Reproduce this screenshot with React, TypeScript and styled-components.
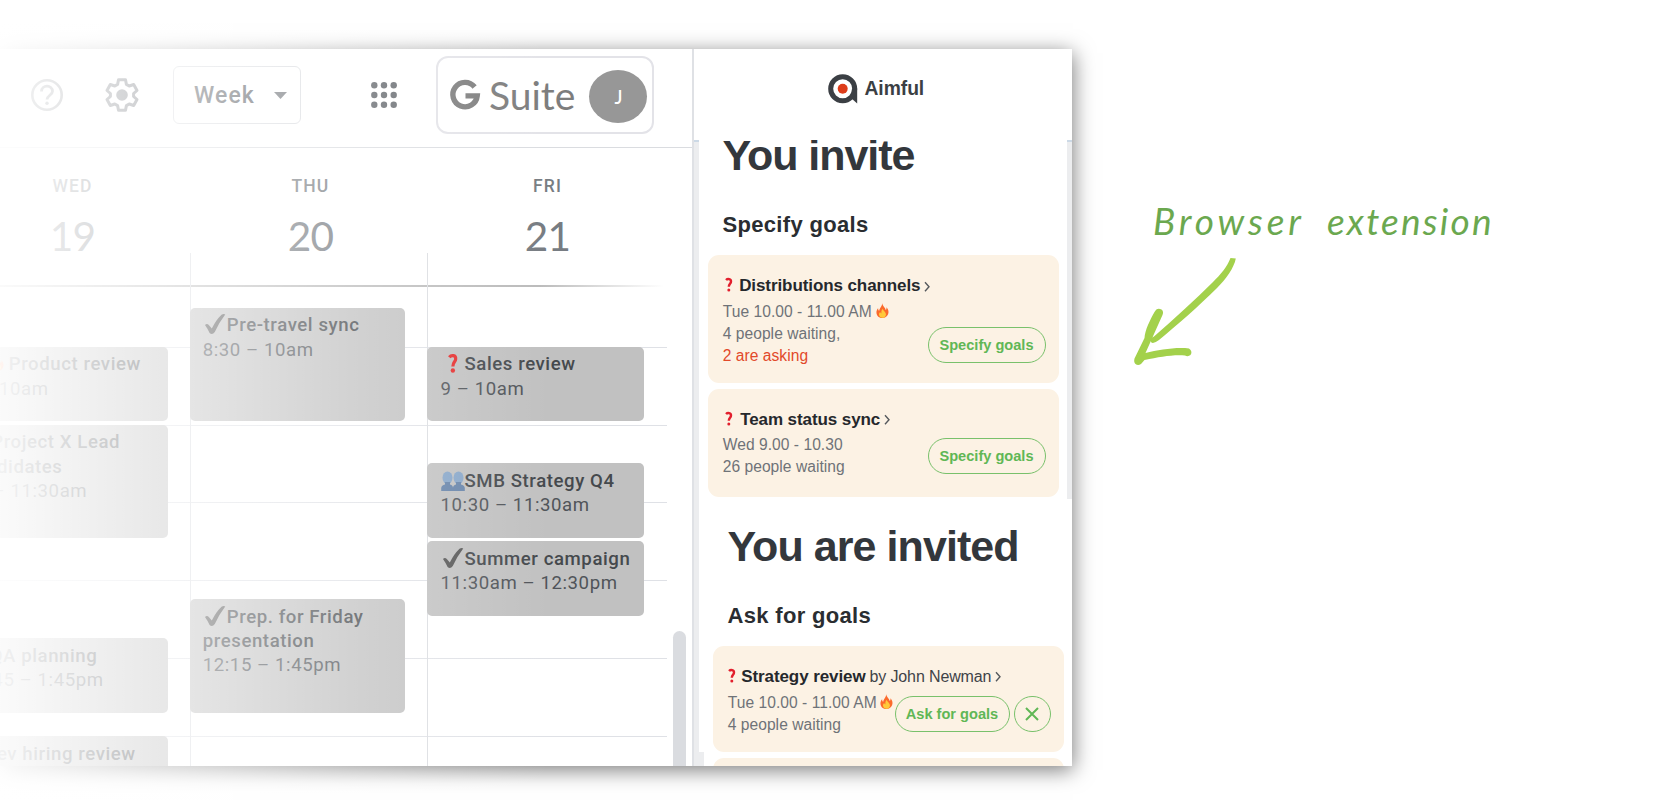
import React from 'react';
import styled, { createGlobalStyle } from 'styled-components';

const Global = createGlobalStyle`
  * { box-sizing: border-box; }
  body { margin: 0; background: #fff; }
`;

const Page = styled.main`
  position: relative;
  display: flex;
  align-items: flex-start;
  width: 1680px;
  height: 800px;
  padding-top: 49.4px;
  overflow: hidden;
  background: #fff;
`;

const Window = styled.section`
  display: flex;
  flex: none;
  width: 1072px;
  height: 716.6px;
  background: #fff;
  box-shadow: 1px 4px 20px rgba(0, 0, 0, 0.52);
`;

const Fade = styled.div`
  position: absolute;
  left: 0;
  top: 0;
  width: 560px;
  height: 800px;
  pointer-events: none;
  background: linear-gradient(
    to right,
    rgba(255, 255, 255, 0.93) 0,
    rgba(255, 255, 255, 0.62) 170px,
    rgba(255, 255, 255, 0.28) 350px,
    rgba(255, 255, 255, 0.14) 440px,
    rgba(255, 255, 255, 0) 550px
  );
`;

/* calendar */

const Calendar = styled.div`
  display: flex;
  flex-direction: column;
  flex: none;
  width: 694px;
  height: 100%;
  overflow: hidden;
  border-right: 2px solid #dfe1e5;
  font-family: Roboto, sans-serif;
`;

const Toolbar = styled.header`
  display: flex;
  align-items: center;
  flex: none;
  height: 98.8px;
  padding-left: 30px;
  padding-bottom: 6px;
  border-bottom: 1.5px solid #dadce0;
`;

const Icon = styled.svg<{ $left?: number }>`
  display: block;
  flex: none;
  overflow: visible;
  margin-left: ${(p) => p.$left ?? 0}px;
`;

const WeekSelect = styled.div`
  display: flex;
  align-items: center;
  justify-content: space-between;
  flex: none;
  width: 128px;
  height: 58px;
  margin-left: 34.5px;
  padding: 0 13px 0 20px;
  border: 1.5px solid #dadce0;
  border-radius: 6px;
  color: #5c6065;
  font-size: 23px;
  font-weight: 500;
  letter-spacing: 1.1px;
`;

const Account = styled.div`
  display: flex;
  align-items: center;
  flex: none;
  width: 217.5px;
  height: 78px;
  margin-left: 38px;
  padding-left: 11px;
  border: 2px solid #e3e3e8;
  border-radius: 12px;
`;

const SuiteName = styled.span`
  margin-left: 8px;
  width: 88px;
  color: #7d7d7d;
  font: 400 39px/44px Lato, sans-serif;
  letter-spacing: 0;
`;

const Avatar = styled.span`
  display: grid;
  place-items: center;
  flex: none;
  width: 58px;
  height: 53px;
  margin: 3px 0 0 11.5px;
  padding-left: 2px;
  border-radius: 50%;
  background: #979797;
  color: #fff;
  font: 500 19px/1 Lato, sans-serif;
`;

const Days = styled.div`
  display: flex;
  flex: none;
  height: 137px;
  padding-top: 28px;
`;

const Day = styled.div<{ $w: number }>`
  flex: none;
  width: ${(p) => p.$w}px;
  text-align: center;
  color: #787d82;
`;

const DayName = styled.div`
  font-size: 17.5px;
  font-weight: 500;
  line-height: 20px;
  letter-spacing: 1.1px;
`;

const DayNumber = styled.div`
  margin-top: 15px;
  color: #777c82;
  font: 400 40.5px/50px Lato, sans-serif;
  letter-spacing: -0.8px;
`;

const Body = styled.div`
  display: grid;
  grid-template-columns: 667px 6px 13px;
  grid-template-rows: minmax(0, 1fr);
  flex: 1;
  min-height: 0;
  margin-top: -32px;
`;

const Hours = styled.div`
  grid-area: 1 / 1;
  padding-top: 32px;
`;

const TopRule = styled.div`
  height: 1.6px;
  background: linear-gradient(to right, #bbb 0, #bbb 540px, rgba(187, 187, 187, 0) 664px);
`;

const Hour = styled.div<{ $h: number }>`
  height: ${(p) => p.$h}px;
  border-bottom: 1.6px solid #dfe1e6;
`;

const Columns = styled.div`
  grid-area: 1 / 1;
  display: flex;
  margin-left: -47px;
`;

const Column = styled.div<{ $w: number }>`
  flex: none;
  width: ${(p) => p.$w}px;
  border-left: 1.5px solid #dadce0;
`;

const Event = styled.article<{ $gap: number; $h: number; $w?: number; $in?: number }>`
  width: ${(p) => p.$w ?? 215}px;
  height: ${(p) => p.$h}px;
  margin: ${(p) => p.$gap}px 0 0 -0.8px;
  padding: 5.6px 0 0 ${(p) => p.$in ?? 12.5}px;
  border-radius: 5px;
  background: #c1c1c1;
  color: #45494d;
  font-size: 18.6px;
  line-height: 24.3px;
  letter-spacing: 0.58px;
  white-space: nowrap;
`;

const EventTitle = styled.div`
  display: flex;
  align-items: center;
  font-weight: 500;
  height: 24.3px;
`;

const Indented = styled.span<{ $left: number }>`
  margin-left: ${(p) => p.$left}px;
`;

const EventTime = styled.div`
  color: #505459;
`;

const Scrollbar = styled.div`
  grid-area: 1 / 3;
  align-self: end;
  height: 135px;
  border-radius: 7px 7px 0 0;
  background: #dadce0;
`;

/* extension panel */

const Panel = styled.aside`
  display: flex;
  flex-direction: column;
  width: 378px;
  height: 100%;
  overflow: hidden;
  font-family: 'Liberation Sans', Arial, sans-serif;
`;

const Brand = styled.div`
  display: flex;
  align-items: center;
  flex: none;
  height: 91px;
  padding: 0 0 11px 134px;
  color: #3b3f44;
  font-size: 19.3px;
  font-weight: 700;
`;

const BrandName = styled.span`
  margin-left: 6.5px;
  letter-spacing: -0.05px;
`;

const PanelBody = styled.div`
  display: flex;
  align-items: flex-start;
  flex: 1;
  min-height: 0;
`;

const Edge = styled.div<{ $h: string }>`
  flex: none;
  width: 5px;
  height: ${(p) => p.$h};
  border-top: 2px solid #ccd9e6;
  background: #ecedef;
`;

const Content = styled.div`
  flex: none;
  width: 368px;
  height: 100%;
  overflow: hidden;
  background: linear-gradient(#ecedef, #ecedef) left bottom / 5px 14px no-repeat;
`;

const Group = styled.section<{ $shift: number; $top: number }>`
  width: 351.5px;
  margin: ${(p) => p.$top}px 0 0 ${(p) => p.$shift}px;
`;

const Heading = styled.h1<{ $ls?: number }>`
  margin: 0 0 43.7px 15px;
  color: #33373c;
  font-size: 43px;
  line-height: 30px;
  letter-spacing: ${(p) => p.$ls ?? -1.05}px;
  white-space: nowrap;
`;

const Subheading = styled.h2`
  margin: 0 0 18.9px 15px;
  color: #2a2d31;
  font-size: 22px;
  line-height: 22px;
  letter-spacing: 0.32px;
`;

const Card = styled.article<{ $h: number; $pad?: number }>`
  height: ${(p) => p.$h}px;
  margin-bottom: 6px;
  padding: ${(p) => p.$pad ?? 20.4}px 13.5px 0 15.2px;
  border-radius: 11px;
  background: #fcf2e4;
`;

const CardTitle = styled.div`
  display: flex;
  align-items: center;
  height: 22px;
  color: #25282c;
  font-size: 17px;
  line-height: 22px;
  white-space: nowrap;
`;

const TitleText = styled.strong<{ $left: number }>`
  margin-left: ${(p) => p.$left}px;
  letter-spacing: -0.09px;
`;

const Owner = styled.span`
  margin-left: 4px;
  color: #3f4348;
  font-size: 16px;
  letter-spacing: -0.13px;
`;

const CardRow = styled.div`
  display: flex;
  align-items: flex-end;
  justify-content: space-between;
  margin-top: 3.6px;
`;

const Lines = styled.div`
  width: 160px;
  color: #6f7378;
  font-size: 15.6px;
  line-height: 22px;
  letter-spacing: 0.04px;
  white-space: nowrap;
`;

const Line = styled.div<{ $alert?: boolean }>`
  display: flex;
  align-items: center;
  height: 22px;
  color: ${(p) => (p.$alert ? '#e2492a' : 'inherit')};
`;

const Actions = styled.div`
  display: flex;
  flex: none;
  gap: 4px;
  margin-bottom: 4px;
`;

const Pill = styled.button<{ $w: number }>`
  flex: none;
  width: ${(p) => p.$w}px;
  height: 36px;
  padding: 0;
  border: 1.6px solid #79c16b;
  border-radius: 18px;
  background: transparent;
  color: #60b755;
  font: 700 14.6px/32px 'Liberation Sans', Arial, sans-serif;
  white-space: nowrap;
`;

const Round = styled(Pill)`
  display: grid;
  place-items: center;
`;

/* annotation */

const Note = styled.div`
  flex: none;
  width: 400px;
  margin: 149px 0 0 61px;
`;

const NoteText = styled.div`
  display: flex;
  gap: 22px;
  margin-left: 20px;
  color: #6ba84f;
  font: italic 400 37px/46px Lato, sans-serif;
  white-space: nowrap;
`;

const NoteWord = styled.span<{ $ls: number }>`
  letter-spacing: ${(p) => p.$ls}px;
`;

const Check = () => (
  <Icon width="24" height="22" viewBox="0 0 24 22">
    <path d="M2 11 Q4 8.800 6 11.200 L8.800 14.600 Q13 6 18.500 .8 Q20.800 -.5 22.200 .6 Q16.500 8 11.800 18 Q9.200 21.500 6.600 19 Q4.500 14.500 2 11Z" fill="#555" />
  </Icon>
);

const Question = () => (
  <Icon width="8" height="16" viewBox="0 0 8 16">
    <path d="M1 2 C2.600 .4 6.300 .6 6 3.600 C5.800 5.800 3.900 6 3.800 8.800" fill="none" stroke="#e21f2d" strokeWidth="2.400" />
    <circle cx="3.800" cy="12" r="1.500" fill="#e21f2d" />
  </Icon>
);

const Fire = ({ left = 4.5 }: { left?: number }) => (
  <Icon $left={left} width="13" height="17" viewBox="0 0 14 18">
    <path d="M6.500 0 C7 3 10 4.500 10.500 7.500 C11.300 7 11.400 5.500 11.300 4.500 C13.500 7 14 9.500 13 12 C12 14.600 9.600 16 7 16 C3.500 16 .8 13.800 .5 10.500 C.3 8.500 1.200 6.500 2.300 5.500 C2.300 7 2.700 7.800 3.500 8.200 C3.600 5 6.800 3.500 6.500 0Z" fill="#fb6a2c" />
    <path d="M7.300 6 C7.500 8.300 11 9.500 10.700 12.500 C10.400 14.800 8.800 15.800 7 15.800 C5 15.800 3.300 14.500 3.200 12.300 C3.200 11 3.900 10 4.500 9.600 C4.800 10.600 5.200 11 5.900 11 C5.500 9 6 7.200 7.300 6Z" fill="#ffc93a" />
  </Icon>
);

const People = () => (
  <Icon width="24" height="20" viewBox="0 0 24 20">
    <g fill="#86a5c8">
      <ellipse cx="6.500" cy="6.800" rx="5" ry="6.300" />
      <ellipse cx="17.500" cy="6.800" rx="5" ry="6.300" />
    </g>
    <path d="M4 11 H9 V13.500 Q12 14 12 17 V20 H.2 V17 Q.5 14 4 13.500Z M15 11 H20 V13.500 Q23.500 14 23.800 17 V20 H12 V17 Q12 14 15 13.500Z" fill="#6582a8" />
  </Icon>
);

const Chevron = ({ left = 4 }: { left?: number }) => (
  <Icon $left={left} width="6" height="11" viewBox="0 0 6 11">
    <path d="M1 1.300 L5 5.800 L1 10.300" fill="none" stroke="#55595d" strokeWidth="1.400" />
  </Icon>
);

export default function App() {
  return (
    <Page>
      <Global />
      <Window>
        <Calendar>
          <Toolbar>
            <Icon width="34" height="34" viewBox="0 0 34 34" fill="none" stroke="#7b7f84">
              <circle cx="17" cy="17" r="14.700" strokeWidth="2.600" />
              <path d="M11.500 13.500 C11.500 6.500 22.500 6.500 22.500 13.300 C22.500 17 17 17.500 17 21.500" strokeWidth="2.800" />
              <circle cx="17" cy="25.300" r="1.700" fill="#7b7f84" stroke="none" />
            </Icon>
            <Icon $left={40.5} width="34" height="34" viewBox="0 0 34 34">
              <path
                d="M13.500 1.800 H20.500 L21.400 6.400 L24.200 8 L28.700 6.500 L32 12.500 L28.600 15.500 V18.500 L32 21.500 L28.700 27.500 L24.200 26 L21.400 27.600 L20.500 32.200 H13.500 L12.600 27.600 L9.800 26 L5.300 27.500 L2 21.500 L5.400 18.500 V15.500 L2 12.500 L5.300 6.500 L9.800 8 L12.600 6.400 Z"
                fill="none"
                stroke="#73777d"
                strokeWidth="3"
                strokeLinejoin="round"
              />
              <circle cx="17" cy="17" r="5.800" fill="#73777d" />
            </Icon>
            <WeekSelect>
              Week
              <Icon width="13" height="7" viewBox="0 0 13 7">
                <path d="M0 0 H13 L6.500 7Z" fill="#6f7378" />
              </Icon>
            </WeekSelect>
            <Icon $left={69} width="28" height="28" viewBox="0 0 28 28" fill="#63676c">
              {[4.3, 14, 23.7].map((y) => [4.3, 14, 23.7].map((x) => <circle key={`${x}-${y}`} cx={x} cy={y} r="3.200" />))}
            </Icon>
            <Account>
              <Icon width="32" height="32" viewBox="0 0 32 32">
                <path d="M25.600 8 A12.200 12.200 0 1 0 28.200 16.900 H16.500" fill="none" stroke="#7d7d7d" strokeWidth="5.400" />
              </Icon>
              <SuiteName>Suite</SuiteName>
              <Avatar>J</Avatar>
            </Account>
          </Toolbar>
          <Days>
            <Day $w={145}>
              <DayName>WED</DayName>
              <DayNumber>19</DayNumber>
            </Day>
            <Day $w={331}>
              <DayName>THU</DayName>
              <DayNumber>20</DayNumber>
            </Day>
            <Day $w={143}>
              <DayName>FRI</DayName>
              <DayNumber>21</DayNumber>
            </Day>
          </Days>
          <Body>
            <Hours>
              <TopRule />
              <Hour $h={61} />
              <Hour $h={77.8} />
              <Hour $h={77.8} />
              <Hour $h={77.8} />
              <Hour $h={77.8} />
              <Hour $h={77.8} />
            </Hours>
            <Columns>
              <Column $w={237}>
                <Event $gap={93.5} $h={74} $in={11.5}>
                  <EventTitle>
                    <Icon width="26" height="1" />
                    <Fire left={0} />
                    <Indented $left={5}>Product review</Indented>
                  </EventTitle>
                  <EventTime>9 – 10am</EventTime>
                </Event>
                <Event $gap={4} $h={113} $in={12}>
                  <EventTitle>
                    <Indented $left={26}>Project X Lead</Indented>
                  </EventTitle>
                  <EventTitle>candidates</EventTitle>
                  <EventTime>10 – 11:30am</EventTime>
                </Event>
                <Event $gap={100.5} $h={74.5} $in={12}>
                  <EventTitle>
                    <Indented $left={24.5}>QA planning</Indented>
                  </EventTitle>
                  <EventTime>12:45 – 1:45pm</EventTime>
                </Event>
                <Event $gap={23.5} $h={74} $in={12}>
                  <EventTitle>
                    <Indented $left={19}>Dev hiring review</Indented>
                  </EventTitle>
                </Event>
              </Column>
              <Column $w={236.8}>
                <Event $gap={54.5} $h={113}>
                  <EventTitle>
                    <Check />
                    Pre-travel sync
                  </EventTitle>
                  <EventTime>8:30 – 10am</EventTime>
                </Event>
                <Event $gap={178.5} $h={113.5}>
                  <EventTitle>
                    <Check />
                    Prep. for Friday
                  </EventTitle>
                  <EventTitle>presentation</EventTitle>
                  <EventTime>12:15 – 1:45pm</EventTime>
                </Event>
              </Column>
              <Column $w={237}>
                <Event $gap={93.5} $h={74} $w={217} $in={13.5}>
                  <EventTitle>
                    <Icon width="24" height="20" viewBox="0 0 24 20">
                      <g transform="translate(7 -.5) scale(1.280 1.320)">
                        <path d="M1 2.900 C2.600 .9 6.300 1.200 6 4.200 C5.800 6.300 3.900 6.600 3.800 9.800" fill="none" stroke="#e52a2a" strokeWidth="2.500" />
                        <circle cx="3.800" cy="12.900" r="1.700" fill="#e52a2a" />
                      </g>
                    </Icon>
                    Sales review
                  </EventTitle>
                  <EventTime>9 – 10am</EventTime>
                </Event>
                <Event $gap={42.5} $h={74.5} $w={217} $in={13.5}>
                  <EventTitle>
                    <People />
                    SMB Strategy Q4
                  </EventTitle>
                  <EventTime>10:30 – 11:30am</EventTime>
                </Event>
                <Event $gap={3.5} $h={74.5} $w={217} $in={13.5}>
                  <EventTitle>
                    <Check />
                    Summer campaign
                  </EventTitle>
                  <EventTime>11:30am – 12:30pm</EventTime>
                </Event>
              </Column>
            </Columns>
            <Scrollbar />
          </Body>
        </Calendar>
        <Panel>
          <Brand>
            <Icon width="30" height="30" viewBox="0 0 30 30">
              <circle cx="14.700" cy="14.700" r="12" fill="none" stroke="#3b3f44" strokeWidth="5" />
              <path d="M24 14.500 H29.200 V29.500 L23 24Z" fill="#3b3f44" />
              <circle cx="14.700" cy="14.700" r="5" fill="#dd3d1b" />
            </Icon>
            <BrandName>Aimful</BrandName>
          </Brand>
          <PanelBody>
            <Edge $h="100%" />
            <Content>
              <Group $shift={8.5} $top={0}>
                <Heading>You invite</Heading>
                <Subheading>Specify goals</Subheading>
                <Card $h={128.5}>
                  <CardTitle>
                    <Icon width="2" height="1" />
                    <Question />
                    <TitleText $left={6.5}>Distributions channels</TitleText>
                    <Chevron />
                  </CardTitle>
                  <CardRow>
                    <Lines>
                      <Line>
                        Tue 10.00 - 11.00 AM
                        <Fire />
                      </Line>
                      <Line>4 people waiting,</Line>
                      <Line $alert>2 are asking</Line>
                    </Lines>
                    <Actions>
                      <Pill $w={118}>Specify goals</Pill>
                    </Actions>
                  </CardRow>
                </Card>
                <Card $h={108} $pad={19.4}>
                  <CardTitle>
                    <Icon width="2" height="1" />
                    <Question />
                    <TitleText $left={7.5}>Team status sync</TitleText>
                    <Chevron />
                  </CardTitle>
                  <CardRow>
                    <Lines>
                      <Line>Wed 9.00 - 10.30</Line>
                      <Line>26 people waiting</Line>
                    </Lines>
                    <Actions>
                      <Pill $w={118}>Specify goals</Pill>
                    </Actions>
                  </CardRow>
                </Card>
              </Group>
              <Group $shift={13.5} $top={34}>
                <Heading $ls={-0.93}>You are invited</Heading>
                <Subheading>Ask for goals</Subheading>
                <Card $h={106} $pad={19.9}>
                  <CardTitle>
                    <Question />
                    <TitleText $left={5.5}>Strategy review</TitleText>
                    <Owner>by John Newman</Owner>
                    <Chevron />
                  </CardTitle>
                  <CardRow>
                    <Lines>
                      <Line>
                        Tue 10.00 - 11.00 AM
                        <Fire left={3.5} />
                      </Line>
                      <Line>4 people waiting</Line>
                    </Lines>
                    <Actions>
                      <Pill $w={115}>Ask for goals</Pill>
                      <Round $w={37} aria-label="Dismiss">
                        <Icon width="14" height="14" viewBox="0 0 14 14">
                          <path d="M1 1 L13 13 M13 1 L1 13" stroke="#60b755" strokeWidth="2" />
                        </Icon>
                      </Round>
                    </Actions>
                  </CardRow>
                </Card>
                <Card $h={60} />
              </Group>
            </Content>
            <Edge $h="359px" />
          </PanelBody>
        </Panel>
      </Window>
      <Note>
        <NoteText>
          <NoteWord $ls={3.9}>Browser</NoteWord>
          <NoteWord $ls={2.2}>extension</NoteWord>
        </NoteText>
        <Icon width="110" height="125" viewBox="0 0 110 125" fill="#a3d14b">
          <path d="M97.500 14 L102.800 14.500 C101 24 93 35 84 44 C66 62 44 81 26 96 Q20 100.500 18 98 Q16.500 94 21 92.500 C42 74 62 56 80 38 C88 30 94 23 97.500 14Z" />
          <path d="M21.500 68 Q24 63 28.500 65.500 Q31 67.500 29.500 71 L12.500 109 C26 106 42 103 56 104.500 Q60 107.500 57.500 111 Q55 113 52 111.500 C39 110.500 27 113 11.500 116 L8 120 Q5 122 2.500 120 Q.5 118 1.500 114.500 L11.500 94 C12 86 17 76 21.500 68Z" />
        </Icon>
      </Note>
      <Fade />
    </Page>
  );
}
